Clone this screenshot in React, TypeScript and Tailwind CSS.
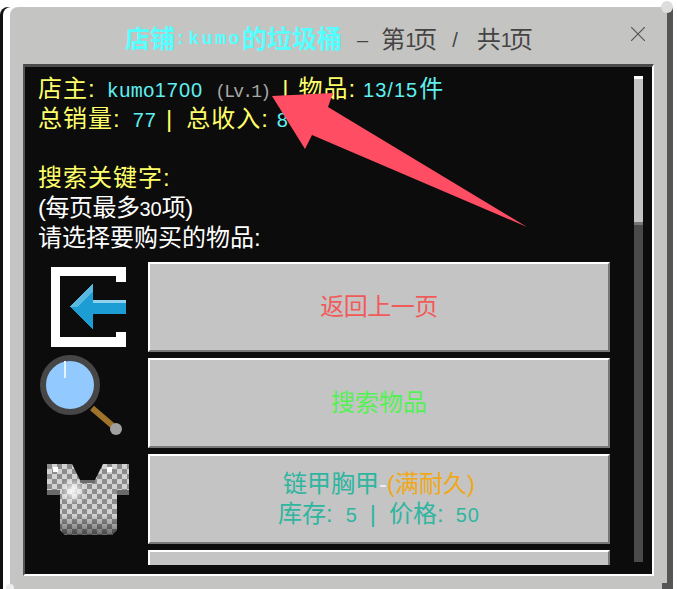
const Back = () => (
  <svg width="75" height="80" viewBox="0 0 75 80" shapeRendering="crispEdges">
    <path fill="#fff" d="M0 0h75v15H65V9H9v61h56v-5h10v15H0z" />
    <path fill="#1c9ed4" d="M19 40 42 16v17h33v14H42v16z" />
    <path fill="#8fd2ee" d="M42 33h33v3H42z" />
    <path fill="#57b8e0" d="M42 16v8L26 40h-7z" />
  </svg>
);

const Magnifier = () => (
  <svg width="86" height="84" viewBox="0 0 86 84">
    <path stroke="#a0732a" strokeWidth="6" d="M54 55 75 73" />
    <circle cx="78" cy="76" r="6" fill="#a0a0a0" />
    <circle cx="32" cy="32" r="27" fill="#92c9ff" stroke="#464646" strokeWidth="6" />
    <path stroke="#e4f2ff" strokeWidth="2" d="M27 8v17" />
  </svg>
);

const Chestplate = () => (
  <svg width="82" height="71" viewBox="0 0 82 71">
    <defs>
      <pattern id="mail" width="10" height="10" patternUnits="userSpaceOnUse">
        <rect width="10" height="10" fill="#d2d2d2" />
        <rect width="5" height="5" fill="#8c8c8c" />
        <rect x="5" y="5" width="5" height="5" fill="#8c8c8c" />
      </pattern>
      <linearGradient id="fade" x1="0" y1="0" x2="0" y2="1">
        <stop offset="0.72" stopColor="#000" stopOpacity="0" />
        <stop offset="1" stopColor="#000" stopOpacity="0.5" />
      </linearGradient>
      <radialGradient id="shine">
        <stop offset="0" stopColor="#fff" stopOpacity="0.95" />
        <stop offset="1" stopColor="#fff" stopOpacity="0" />
      </radialGradient>
    </defs>
    <path fill="url(#mail)" d="M0 0h25l8 16h15l8-16h26v31H70v35l-5 5H18l-5-5V31H0z" />
    <path fill="url(#fade)" d="M0 0h25l8 16h15l8-16h26v31H70v35l-5 5H18l-5-5V31H0z" />
    <path fill="#6a6a6a" d="M0 26h13v5H0zM70 26h12v5H70zM33 16h15v3H33z" />
    <circle cx="26" cy="27" r="13" fill="url(#shine)" />
    <path fill="#fff" d="M6 3h5v5H6zM60 3h5v5h-5z" />
  </svg>
);

const Num = ({ children, className = "" }: { children: React.ReactNode; className?: string }) => (
  <span className={`text-[20px] tracking-[1px] ${className}`}>{children}</span>
);

const ShopButton = ({ children }: { children?: React.ReactNode }) => (
  <div className="flex h-[90px] shrink-0 flex-col items-center justify-center border-t-2 border-r-2 border-b-2 border-l-2 border-t-white border-r-[#777] border-b-[#777] border-l-white bg-[#c4c4c4] text-[24px]">
    {children}
  </div>
);

const App = () => {
  return (
    <div className="relative h-[589px] w-[677px] overflow-hidden bg-white font-['Liberation_Sans','Noto_Sans_CJK_SC',sans-serif]">
      <div className="ml-[10px] mt-[7px] flex h-[582px] w-[663px] flex-col rounded-tl-[8px] border-r-[6px] border-r-[#555] bg-[#c4c4c2] pl-[13px] shadow-[-7px_0_0_#fff,-10px_0_0_#111]">
        <div className="flex h-[57px] shrink-0 items-center pl-[102px] pt-[8px]">
          <span className="text-[25px] font-bold text-[#55ffff]">店铺</span>
          <span className="font-['Liberation_Mono'] text-[18px] font-bold tracking-[2.6px] text-[#55ffff]">:kumo</span>
          <span className="text-[25px] font-bold text-[#55ffff]">的垃圾桶</span>
          <div className="flex items-center text-[24px] text-[#444]">
            <span className="ml-[15px] text-[20px]">–</span>
            <span className="ml-[13px]">第</span>
            <span className="text-[20px] tracking-[-3px]">1</span>
            <span>页</span>
            <span className="ml-[15px] text-[20px]">/</span>
            <span className="ml-[19px]">共</span>
            <span className="text-[20px] tracking-[-3px]">1</span>
            <span>页</span>
          </div>
        </div>
        <div className="flex h-[512px] w-[631px] border-t-[3px] border-r-2 border-b-2 border-l-2 border-t-[#4a4a4a] border-r-white border-b-white border-l-[#555] bg-[#0c0c0c]">
          <div className="flex w-[585px] flex-col">
            <div className="pl-[13px] pt-[7px] text-[24px] leading-[30px] tracking-[1px] text-[#ffff6a]">
              <p className="h-[30px]">
                店主:
                <span className="ml-[11px] font-['Liberation_Mono'] text-[20px] tracking-normal text-[#5ff0f0]">kumo</span>
                <Num className="text-[#5ff0f0]">1700</Num>
                <span className="ml-[12px] font-['Liberation_Mono'] text-[18px] tracking-[-1.8px] text-[#a8a8a8]">(Lv.1)</span>
                <span className="ml-[13px]">|</span>
                <span className="ml-[9px]">物品:</span>
                <Num className="ml-[7px] text-[#5ff0f0]">13/15</Num>
                <span className="ml-[1px] text-[#5ff0f0]">件</span>
              </p>
              <p className="h-[30px]">
                总销量:
                <Num className="ml-[12px] text-[#5ff0f0]">77</Num>
                <span className="ml-[9px]">|</span>
                <span className="ml-[13px]">总收入:</span>
                <Num className="ml-[8px] text-[#5ff0f0]">8</Num>
              </p>
              <p className="mt-[29px] h-[30px]">搜索关键字:</p>
              <p className="h-[30px] tracking-[-0.5px] text-white">
                (每页最多<Num className="tracking-normal">30</Num>项)
              </p>
              <p className="h-[30px] tracking-normal text-white">请选择要购买的物品:</p>
            </div>
            <div className="mt-[9px] flex h-[303px] gap-[6px] overflow-hidden">
              <div className="flex w-[117px] shrink-0 flex-col">
                <div className="ml-[26px] mt-[5px] flex">
                  <Back />
                </div>
                <div className="ml-[13px] mt-[6px] flex">
                  <Magnifier />
                </div>
                <div className="ml-[22px] mt-[27px] flex">
                  <Chestplate />
                </div>
              </div>
              <div className="flex min-w-0 flex-1 flex-col gap-[6px]">
                <ShopButton>
                  <span className="h-[30px] leading-[30px] tracking-[-0.5px] text-[#f25a5a]">返回上一页</span>
                </ShopButton>
                <ShopButton>
                  <span className="h-[30px] leading-[30px] text-[#55f055]">搜索物品</span>
                </ShopButton>
                <ShopButton>
                  <span className="h-[30px] leading-[30px] text-[#2fb5a0]">
                    链甲胸甲<span className="text-[#eee]">-</span>
                    <span className="text-[#f0a818]">(满耐久)</span>
                  </span>
                  <span className="h-[30px] leading-[30px] text-[#2fb5a0]">
                    库存:<Num className="ml-[13px]">5</Num>
                    <span className="ml-[12px]">|</span>
                    <span className="ml-[13px]">价格:</span>
                    <Num className="ml-[12px]">50</Num>
                  </span>
                </ShopButton>
                <ShopButton />
              </div>
            </div>
          </div>
          <div className="ml-[24px] mt-[9px] h-[486px] w-[9px] bg-[#4a4a4a]">
            <div className="h-[149px] border-t-[3px] border-b-[3px] border-t-white border-b-[#777] bg-[#c4c4c4]" />
          </div>
        </div>
      </div>
      <svg className="absolute left-[631px] top-[27px]" width="14" height="14" viewBox="0 0 14 14">
        <path stroke="#555" strokeWidth="1.2" fill="none" d="M0 0 14 14M14 0 0 14" />
      </svg>
      <div className="absolute left-[661px] top-[1px] h-[12px] w-[12px] rounded-full bg-[#ddd]" />
      <div className="absolute left-[662px] top-[583px] h-[6px] w-[5px] bg-[#555]" />
      <div className="absolute left-[6px] top-[584px] h-[8px] w-[8px] rounded-full bg-[#eee]" />
      <svg className="absolute left-0 top-0" width="677" height="589" viewBox="0 0 677 589">
        <path fill="#ff4d63" d="M272 96 333 93 328 107 527 227 312 135 305 149z" />
      </svg>
    </div>
  );
};

export default App;
